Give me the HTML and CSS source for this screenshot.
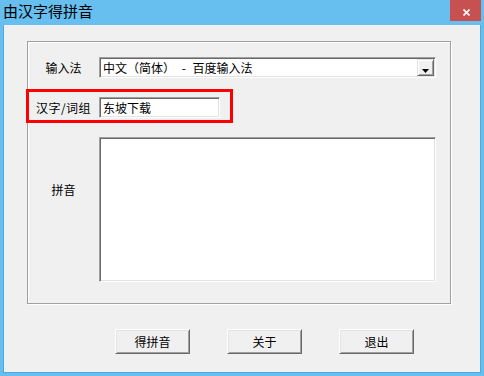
FILE: index.html
```html
<!DOCTYPE html>
<html lang="zh-CN">
<head>
<meta charset="utf-8">
<title>由汉字得拼音</title>
<link rel="stylesheet" href="styles.css">
</head>
<body>
<div class="window">
  <div class="titlebar">
    <span class="title">由汉字得拼音</span>
    <div class="close">
      <svg width="7" height="7" viewBox="0 0 7 7"><path d="M0.5 0.5 L6.5 6.5 M6.5 0.5 L0.5 6.5" stroke="#fff" stroke-width="1.6" fill="none"/></svg>
    </div>
  </div>
  <div class="client">
    <div class="group">
      <div class="grid">
        <span class="lbl">输入法</span>
        <div class="combo sunken">
          <span class="combo-text">中文（简体） - 百度输入法</span>
          <span class="drop"><svg width="7" height="4" viewBox="0 0 7 4"><polygon points="0,0 7,0 3.5,4" fill="#000"/></svg></span>
        </div>
        <span class="lbl lbl-wide">汉字/词组</span>
        <div class="edit sunken">东坡下载</div>
        <span class="lbl lbl-top">拼音</span>
        <div class="memo sunken"></div>
      </div>
      <div class="highlight"></div>
    </div>
    <div class="buttons">
      <button class="btn">得拼音</button>
      <button class="btn">关于</button>
      <button class="btn">退出</button>
    </div>
  </div>
</div>
</body>
</html>
```
FILE: styles.css
```css
html, body {
  margin: 0;
  padding: 0;
}
body {
  font-family: "Noto Sans CJK SC", "Noto Sans", sans-serif;
  font-size: 12px;
  color: #000;
}
.window {
  width: 484px;
  height: 376px;
  box-sizing: border-box;
  background: #66bfee;
  padding: 0 3px 3px 3px;
  display: flex;
  flex-direction: column;
}
.titlebar {
  height: 25px;
  flex: none;
  display: flex;
  justify-content: space-between;
  align-items: flex-start;
}
.title {
  font-size: 15px;
  line-height: 22px;
  color: #000;
}
.close {
  width: 31px;
  height: 21px;
  box-sizing: border-box;
  background: #c75050;
  padding: 9px 0 0 13px;
}
.close svg {
  display: block;
}
.client {
  flex: 1;
  background: #f0f0f0;
  border: 1px solid #4fa8df;
  border-top: none;
  display: flex;
  flex-direction: column;
  align-items: flex-start;
}
.group {
  position: relative;
  margin: 16px 0 0 23px;
  width: 424px;
  height: 263px;
  box-sizing: border-box;
  border: 1px solid #a0a0a0;
  box-shadow: inset 1px 1px 0 #fff, 1px 1px 0 #fff;
  padding: 15px 14px 0 0;
}
.grid {
  display: grid;
  grid-template-columns: 71px 337px;
  grid-template-rows: 21px 21px 145px;
  row-gap: 19px;
}
.lbl {
  justify-self: center;
  align-self: center;
  line-height: 16px;
  white-space: nowrap;
}
.lbl-wide {
  letter-spacing: 0.5px;
}
.lbl-top {
  align-self: start;
  margin-top: 45px;
}
.sunken {
  box-sizing: border-box;
  background: #fff;
  border: 1px solid;
  border-color: #a0a0a0 #fff #fff #a0a0a0;
  box-shadow: inset 1px 1px 0 #696969, inset -1px -1px 0 #e3e3e3;
}
.combo {
  display: flex;
  align-items: center;
  padding: 1px;
}
.combo-text {
  flex: 1;
  padding-left: 2px;
  line-height: 17px;
  white-space: pre;
  word-spacing: 4px;
}
.drop {
  width: 17px;
  height: 17px;
  box-sizing: border-box;
  background: #f0f0f0;
  border: 1px solid;
  border-color: #e3e3e3 #696969 #696969 #e3e3e3;
  box-shadow: inset 1px 1px 0 #fff, inset -1px -1px 0 #a0a0a0;
  display: flex;
  justify-content: center;
  align-items: flex-start;
  padding-top: 9px;
}
.drop svg {
  display: block;
}
.edit {
  width: 121px;
  padding: 1px 0 0 3px;
  line-height: 17px;
  white-space: nowrap;
}
.memo {
  width: 337px;
}
.highlight {
  position: absolute;
  left: -2px;
  top: 47px;
  width: 207px;
  height: 34px;
  box-sizing: border-box;
  border: 3px solid #f00;
}
.buttons {
  display: flex;
  gap: 37px;
  margin: 25px 0 0 111px;
}
.btn {
  width: 75px;
  height: 25px;
  box-sizing: border-box;
  padding: 0;
  font-family: "Noto Sans CJK SC", "Noto Sans", sans-serif;
  font-size: 12px;
  color: #000;
  background: #f0f0f0;
  border: 1px solid;
  border-color: #fff #696969 #696969 #fff;
  box-shadow: inset 1px 1px 0 #e3e3e3, inset -1px -1px 0 #a0a0a0;
}
```
